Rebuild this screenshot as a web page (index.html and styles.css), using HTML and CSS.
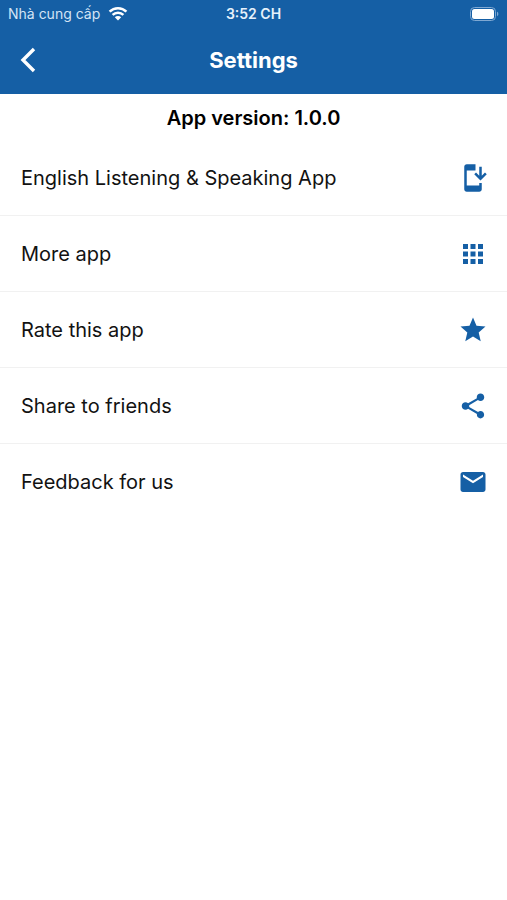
FILE: index.html
```html
<!DOCTYPE html>
<html lang="en">
<head>
<meta charset="utf-8">
<meta name="viewport" content="width=device-width, initial-scale=1">
<title>Settings</title>
<link rel="stylesheet" href="styles.css">
</head>
<body>
<header class="header">
  <div class="status">
    <div class="carrier">
      <span lang="vi">Nhà cung cấp</span>
      <svg class="wifi" viewBox="0 0 20 15" aria-hidden="true">
        <path d="M1.6 5.6a12 12 0 0 1 16.8 0M4.6 8.9a7.8 7.8 0 0 1 10.8 0" fill="none" stroke="currentColor" stroke-width="2.5"/>
        <path d="M6.8 11.2a4.6 4.6 0 0 1 6.4 0L10 14.6z" fill="currentColor"/>
      </svg>
    </div>
    <span class="time">3:52 CH</span>
    <svg class="battery" viewBox="0 0 30 14" aria-hidden="true">
      <rect x="1.5" y=".5" width="25" height="13" rx="4" fill="none" stroke="#7fa8d2"/>
      <rect x="3" y="2" width="22" height="10" rx="2.5" fill="#fff"/>
      <path d="M28 4.8c1.8.6 1.8 3.8 0 4.4z" fill="#7fa8d2"/>
    </svg>
  </div>
  <div class="bar">
    <button class="back" type="button" aria-label="Back">
      <svg viewBox="0 0 16 26" aria-hidden="true"><path d="M14 2 3 13l11 11" fill="none" stroke="currentColor" stroke-width="3.4"/></svg>
    </button>
    <h1 class="title">Settings</h1>
  </div>
</header>
<main>
  <p class="version">App version: 1.0.0</p>
  <ul class="list">
    <li class="item"><a class="row" href="#app"><span>English Listening &amp; Speaking App</span>
      <svg class="icon" viewBox="0 0 24 24" aria-hidden="true"><path d="M17 18H7V6h7V1H7C5.9 1 5 1.9 5 3v18c0 1.1.9 2 2 2h10c1.1 0 2-.9 2-2v-5h-2v2z"/><path d="m18 14 5-5-1.41-1.41L19 10.17V3h-2v7.17l-2.59-2.58L13 9z"/></svg></a></li>
    <li class="item"><a class="row" href="#more"><span>More app</span>
      <svg class="icon" viewBox="0 0 24 24" aria-hidden="true"><path d="M4 8h4V4H4v4zm6 12h4v-4h-4v4zm-6 0h4v-4H4v4zm0-6h4v-4H4v4zm6 0h4v-4h-4v4zm6-10v4h4V4h-4zm-6 4h4V4h-4v4zm6 6h4v-4h-4v4zm0 6h4v-4h-4v4z"/></svg></a></li>
    <li class="item"><a class="row" href="#rate"><span>Rate this app</span>
      <svg class="icon" viewBox="0 0 24 24" aria-hidden="true"><path d="M12 17.27 18.18 21l-1.64-7.03L22 9.24l-7.19-.61L12 2 9.19 8.63 2 9.24l5.46 4.73L5.82 21z"/></svg></a></li>
    <li class="item"><a class="row" href="#share"><span>Share to friends</span>
      <svg class="icon" viewBox="0 0 24 24" aria-hidden="true"><path d="M18 16.08c-.76 0-1.44.3-1.96.77L8.91 12.7c.05-.23.09-.46.09-.7s-.04-.47-.09-.7l7.05-4.11c.54.5 1.25.81 2.04.81 1.66 0 3-1.34 3-3s-1.34-3-3-3-3 1.34-3 3c0 .24.04.47.09.7L8.04 9.81C7.5 9.31 6.79 9 6 9c-1.66 0-3 1.34-3 3s1.34 3 3 3c.79 0 1.5-.31 2.04-.81l7.12 4.16c-.05.21-.08.43-.08.65 0 1.61 1.31 2.92 2.92 2.92s2.92-1.31 2.92-2.92-1.31-2.92-2.92-2.92z"/></svg></a></li>
    <li class="item"><a class="row" href="#feedback"><span>Feedback for us</span>
      <svg class="icon" viewBox="0 0 24 24" aria-hidden="true"><path d="M20 4H4c-1.1 0-1.99.9-1.99 2L2 18c0 1.1.9 2 2 2h16c1.1 0 2-.9 2-2V6c0-1.1-.9-2-2-2zm0 4-8 5-8-5V6l8 5 8-5v2z"/></svg></a></li>
  </ul>
</main>
</body>
</html>
```
FILE: styles.css
```css
* {
  box-sizing: border-box;
}

body {
  margin: 0;
  background: #fff;
  color: #121212;
  font-family: Inter, "Liberation Sans", sans-serif;
}

.header {
  background: #155fa5;
  color: #fff;
}

.status {
  display: grid;
  grid-template-columns: 1fr auto 1fr;
  align-items: center;
  height: 27px;
  padding: 0 8px;
  font-size: 14px;
}

.carrier {
  display: flex;
  align-items: center;
  gap: 8px;
  color: #d3e4f5;
}

.wifi {
  width: 20px;
  height: 15px;
  color: #fff;
}

.time {
  font-weight: 600;
  color: #e6f1fb;
}

.battery {
  justify-self: end;
  width: 30px;
  height: 14px;
}

.bar {
  display: grid;
  grid-template-columns: 1fr auto 1fr;
  align-items: center;
  height: 67px;
  padding: 0 20px 2px;
}

.back {
  display: flex;
  justify-self: start;
  padding: 0;
  border: 0;
  background: none;
  color: inherit;
  cursor: pointer;
}

.back svg {
  width: 16px;
  height: 26px;
}

.title {
  margin: 0;
  font-size: 22px;
  font-weight: 700;
}

.version {
  margin: 0;
  padding: 12px 0 10px;
  font-size: 20px;
  line-height: 24px;
  font-weight: 600;
  text-align: center;
  color: #000;
}

.list {
  margin: 0;
  padding: 0;
  list-style: none;
}

.item {
  border-bottom: 1px solid #f1f1f1;
}

.item:last-child {
  border-bottom: 0;
}

.row {
  display: flex;
  align-items: center;
  justify-content: space-between;
  height: 75px;
  padding: 0 19px 0 21px;
  font-size: 20px;
  color: inherit;
  text-decoration: none;
}

.icon {
  flex: none;
  width: 30px;
  height: 30px;
  fill: #155fa5;
}
```
